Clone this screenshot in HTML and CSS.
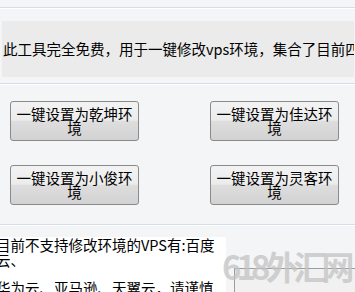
FILE: index.html
```html
<!DOCTYPE html>
<html lang="zh-CN">
<head>
<meta charset="utf-8">
<title>一键修改VPS环境</title>
<link rel="stylesheet" href="styles.css">
</head>
<body>
  <div class="rule rule-top"></div>
  <div class="intro">此工具完全免费，用于一键修改vps环境，集合了目前四大主流面板环境</div>
  <div class="rule rule-mid"></div>
  <div class="buttons">
    <button class="btn">一键设置为乾坤环境</button>
    <button class="btn">一键设置为佳达环境</button>
    <button class="btn">一键设置为小俊环境</button>
    <button class="btn">一键设置为灵客环境</button>
  </div>
  <div class="rule rule-bottom"></div>
  <div class="bottom">
    <div class="notice">
      <p class="para">目前不支持修改环境的VPS有:百度<br>云、</p>
      <p class="para">华为云、亚马逊、天翼云，请谨慎使用本工具</p>
    </div>
    <div class="side">
      <div class="log"></div>
    </div>
  </div>
  <div class="watermark">618外汇网</div>
</body>
</html>
```
FILE: styles.css
```css
html, body {
  margin: 0;
  padding: 0;
}
html {
  overflow: hidden;
}
body {
  width: 355px;
  height: 292px;
  overflow: hidden;
  background: #f4f5f7;
  font-family: "Noto Sans CJK SC", "Noto Sans", sans-serif;
  font-size: 14.5px;
  color: #000;
  position: relative;
}
.rule {
  height: 0;
  border-top: 1px solid #d3dee9;
  border-bottom: 1px solid #ffffff;
}
.rule-top { margin-top: 7px; }
.rule-mid { margin-top: 6px; }
.rule-bottom { margin-top: 19px; }

.intro {
  margin: 12px 1px 0 2px;
  height: 56px;
  background: #ebebeb;
  display: flex;
  align-items: center;
  padding-left: 1px;
  white-space: nowrap;
  overflow: hidden;
  line-height: 16px;
}

.buttons {
  display: grid;
  grid-template-columns: 129px 129px;
  grid-auto-rows: 40px;
  column-gap: 71px;
  row-gap: 24px;
  margin-top: 16px;
  padding-left: 10px;
}
.btn {
  font-family: inherit;
  font-size: 14.5px;
  line-height: 14px;
  color: #000;
  padding: 0 3px;
  margin: 0;
  border: 1px solid #8a8a8a;
  border-radius: 3px;
  background: linear-gradient(#f3f3f3 0%, #ececec 48%, #dedede 50%, #d2d2d2 100%);
  text-align: center;
}

.bottom {
  display: flex;
  margin-top: 11px;
  height: 55px;
  overflow: hidden;
}
.notice {
  width: 230px;
  margin-left: -4px;
  height: 55px;
  background: #ffffff;
  overflow: hidden;
  line-height: 15px;
}
.para {
  margin: 0 0 13px 0;
}
.side {
  flex: 1;
  padding: 31px 0 0 8px;
}
.log {
  height: 40px;
  border-top: 1px solid #9c9c9c;
  border-left: 1px solid #9c9c9c;
  background: #f1f1f1;
}

.watermark {
  position: absolute;
  left: 222px;
  top: 250px;
  font-size: 33px;
  line-height: 33px;
  font-weight: 700;
  letter-spacing: -5px;
  color: rgba(195, 195, 195, 0.75);
  white-space: nowrap;
}
```
